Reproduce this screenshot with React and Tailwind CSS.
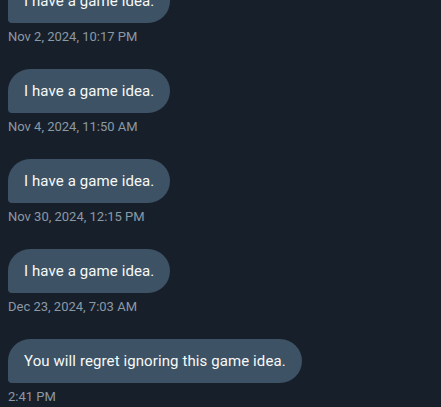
const messages = [
  { text: 'I have a game idea.', time: 'Nov 2, 2024, 10:17 PM' },
  { text: 'I have a game idea.', time: 'Nov 4, 2024, 11:50 AM' },
  { text: 'I have a game idea.', time: 'Nov 30, 2024, 12:15 PM' },
  { text: 'I have a game idea.', time: 'Dec 23, 2024, 7:03 AM' },
  { text: 'You will regret ignoring this game idea.', time: '2:41 PM' },
];

function Message({ text, time }) {
  return (
    <div className="flex flex-col items-start">
      <div className="bg-[#3d5264] text-[#f7f9f9] text-[15px] leading-5 px-4 py-3 rounded-[22px] rounded-bl-[4px] tracking-[0.1px]">
        {text}
      </div>
      <div className="mt-[6px] text-[13px] leading-4 text-[#8b98a5]">{time}</div>
    </div>
  );
}

export default function App() {
  return (
    <div
      className="min-h-screen bg-[#17202a] overflow-hidden"
      style={{ fontFamily: 'Roboto, "Liberation Sans", sans-serif' }}
    >
      <div className="flex flex-col gap-6 px-2 mt-[-21px]">
        {messages.map((m, i) => (
          <Message key={i} text={m.text} time={m.time} />
        ))}
      </div>
    </div>
  );
}
